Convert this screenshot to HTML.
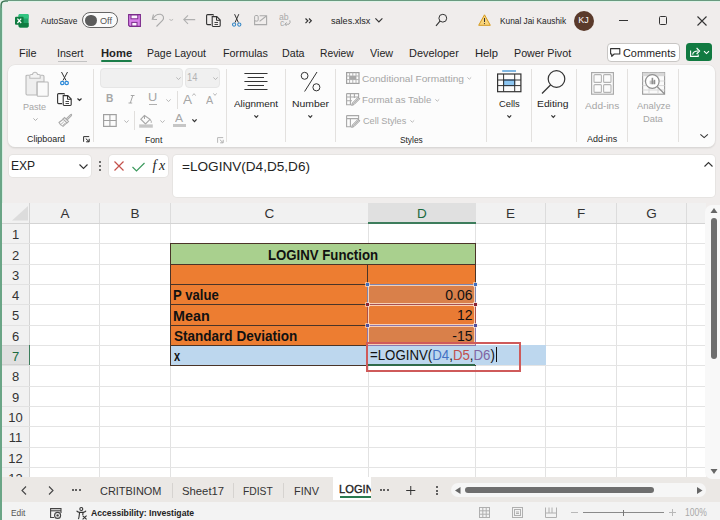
<!DOCTYPE html>
<html><head><meta charset="utf-8"><style>
*{margin:0;padding:0;box-sizing:border-box}
html,body{width:720px;height:520px;overflow:hidden;background:#f0edec;font-family:"Liberation Sans",sans-serif;color:#242424}
.a{position:absolute}
.t{position:absolute;white-space:nowrap;line-height:1}
svg{position:absolute;overflow:visible}
.sep{position:absolute;width:1px;background:#e1dfdd}
</style></head><body>
<div class="a" style="left:0px;top:0px;width:720px;height:1px;background:#6a9a80;"></div>
<div class="a" style="left:0px;top:1px;width:720px;height:1px;background:#dff5e9;"></div>
<div class="a" style="left:0px;top:0px;width:2px;height:520px;background:#6aa586;"></div>
<div class="a" style="left:2px;top:1px;width:1px;height:519px;background:#d7efe2;"></div>
<svg style="left:0px;top:0px;" width="8" height="8" viewBox="0 0 8 8"><path d="M0 0 H8 V1 H5 Q1.2 1.2 1 5 V8 H0 Z" fill="#e4f1e8"/><path d="M1 8 V5.2 Q1.2 1.2 5.2 1 H8" fill="none" stroke="#3f7656" stroke-width="1.3"/><path d="M2.4 8 V5.6 Q2.6 2.6 5.6 2.4 H8" fill="none" stroke="#dff5e9" stroke-width="1"/><path d="M3 8 V6 Q3.2 3.2 6 3 H8 V8 Z" fill="#f0edec"/></svg>
<svg style="left:14.7px;top:13.8px;" width="14" height="14" viewBox="0 0 14 14">
<path d="M5 0 H12.2 Q13.6 0 13.6 1.4 V12 Q13.6 13.4 12.2 13.4 H5 Q3.6 13.4 3.6 12 V1.4 Q3.6 0 5 0Z" fill="#21a366"/>
<path d="M5 0 H12.2 Q13.6 0 13.6 1.4 V4.4 H3.6 V1.4 Q3.6 0 5 0Z" fill="#33c481"/>
<path d="M3.6 9 H13.6 V12 Q13.6 13.4 12.2 13.4 H5 Q3.6 13.4 3.6 12Z" fill="#107c41"/>
<rect x="0" y="2.8" width="8.6" height="8" rx="1" fill="#107c41"/>
<path d="M2.4 4.6 L6.2 9 M6.2 4.6 L2.4 9" stroke="#fff" stroke-width="1.2"/>
</svg>
<div class="t" style="left:41.00px;top:15.75px;font-size:9.5px;height:9.5px;line-height:9.5px;color:#242424;font-weight:normal;transform:scaleX(0.8833);transform-origin:0 0;">AutoSave</div>
<div class="a" style="left:82px;top:12.3px;width:36px;height:16px;border:1px solid #666;border-radius:8px;background:#fbfbfb"></div>
<div class="a" style="left:85px;top:14.7px;width:11.6px;height:11.6px;border-radius:6px;background:#5c5c5c"></div>
<div class="t" style="left:100.13px;top:15.75px;font-size:9.5px;height:9.5px;line-height:9.5px;color:#555;font-weight:normal;transform:scaleX(0.9622);transform-origin:0 0;">Off</div>
<svg style="left:128px;top:13.8px;" width="14" height="14" viewBox="0 0 14 14">
<path d="M.6 .6 H12.4 V12.4 H1.8 L.6 11.2 Z" fill="#d982ea" stroke="#7c2d8c" stroke-width="1.1"/>
<rect x="3" y="1" width="6.8" height="3.8" fill="#fdf4ff" stroke="#7c2d8c" stroke-width="1"/>
<rect x="3.8" y="8.4" width="5.2" height="3.6" fill="#fdf4ff" stroke="#7c2d8c" stroke-width="1"/>
</svg>
<svg style="left:150px;top:12px;" width="26" height="16" viewBox="0 0 26 16">
<path d="M3.5 2.5 L2.3 7.2 L7 7.5" fill="none" stroke="#a9a9a9" stroke-width="1.1"/>
<path d="M2.8 6.8 C5 3 8 2 10.5 2.3 C13.5 2.8 14.5 6 12.5 8.5 L6.5 14.5" fill="none" stroke="#a9a9a9" stroke-width="1.1"/>
</svg>
<svg style="left:169.3px;top:19px;" width="4.5" height="1.8" viewBox="0 0 4.5 1.8"><path d="M0.4 0.4 L2.25 1.4 L4.1 0.4" fill="none" stroke="#b0b0b0" stroke-width="0.9"/></svg>
<svg style="left:183px;top:15.2px;" width="13" height="10" viewBox="0 0 13 10"><path d="M.8 4.6 H12.2 M5 .4 L.8 4.6 L5 8.8" fill="none" stroke="#b0b0b0" stroke-width="1.1"/></svg>
<svg style="left:205.5px;top:14px;" width="15" height="13" viewBox="0 0 15 13">
<path d="M7.5 1.5 V1.2 Q7.5 .6 6.5 .6 H1.6 Q.6 .6 .6 1.6 V9.6 Q.6 10.6 1.6 10.6 H5" fill="none" stroke="#333" stroke-width="1.1"/>
<path d="M6.2 2.6 H10.8 L14.2 6 V11.6 Q14.2 12.5 13.3 12.5 H7.1 Q6.2 12.5 6.2 11.6 Z" fill="none" stroke="#333" stroke-width="1.1"/>
<path d="M10.5 2.8 V6.3 H14" fill="none" stroke="#333" stroke-width="1"/>
<path d="M8.5 8.5 H12 M8.5 10.5 H12" stroke="#333" stroke-width=".9"/>
</svg>
<svg style="left:232px;top:14px;" width="10" height="13" viewBox="0 0 10 13">
<path d="M2.6 .2 L6.4 8.6 M6.8 .2 L3 8.6" stroke="#333" stroke-width="1"/>
<circle cx="2.1" cy="10.6" r="1.6" fill="none" stroke="#3a8ac8" stroke-width="1.1"/>
<circle cx="7.3" cy="10.6" r="1.6" fill="none" stroke="#3a8ac8" stroke-width="1.1"/>
</svg>
<svg style="left:253.5px;top:14.5px;" width="14" height="11" viewBox="0 0 14 11">
<path d="M.6 5 V9.6 H12.6 V.8 H5.6" fill="none" stroke="#a9a9a9" stroke-width="1.1"/>
<rect x=".6" y=".5" width="3.6" height="5.6" rx="1.2" fill="none" stroke="#a9a9a9" stroke-width="1"/>
<path d="M5.6 6.4 L12 1.2" stroke="#a9a9a9" stroke-width="1.1"/>
</svg>
<div class="t" style="left:279.05px;top:13.05px;font-size:8.5px;height:8.5px;line-height:8.5px;color:#a9a9a9;font-weight:normal;transform:scaleX(1.0181);transform-origin:0 0;">ab</div>
<div class="t" style="left:279.55px;top:19.05px;font-size:8.5px;height:8.5px;line-height:8.5px;color:#a9a9a9;font-weight:normal;transform:scaleX(1.0397);transform-origin:0 0;">c</div>
<svg style="left:283.5px;top:19.5px;" width="7" height="6" viewBox="0 0 7 6"><path d="M5.8 .3 Q6.8 2.5 5 4.2 H1 M2.6 2.4 L.8 4.2 L2.6 6" fill="none" stroke="#a9a9a9" stroke-width="1"/></svg>
<svg style="left:305px;top:18px;" width="7" height="6" viewBox="0 0 7 6"><path d="M.5 .5 L2.8 2.8 L.5 5.1 M4 .5 L6.3 2.8 L4 5.1" fill="none" stroke="#333" stroke-width="1.2"/></svg>
<div class="t" style="left:331.43px;top:15.75px;font-size:9.5px;height:9.5px;line-height:9.5px;color:#242424;font-weight:normal;transform:scaleX(0.9569);transform-origin:0 0;">sales.xlsx</div>
<svg style="left:374.5px;top:18.3px;" width="7.8" height="4.4" viewBox="0 0 7.8 4.4"><path d="M0.4 0.4 L3.9 4.0 L7.3999999999999995 0.4" fill="none" stroke="#333" stroke-width="1.1"/></svg>
<svg style="left:435px;top:13px;" width="14" height="14" viewBox="0 0 14 14"><circle cx="7.8" cy="5.2" r="3.9" fill="none" stroke="#333" stroke-width="1"/><path d="M5 8.1 L1 12.8" stroke="#333" stroke-width="1.1"/></svg>
<svg style="left:478px;top:14px;" width="13" height="12" viewBox="0 0 13 12"><path d="M6.5 0.8 L12.3 11.3 H0.7 Z" fill="#f9d57c" stroke="#d49a1f" stroke-width="1"/><path d="M6.5 4 V8" stroke="#333" stroke-width="1"/><circle cx="6.5" cy="9.6" r=".6" fill="#333"/></svg>
<div class="t" style="left:499.74px;top:15.75px;font-size:9.5px;height:9.5px;line-height:9.5px;color:#242424;font-weight:normal;transform:scaleX(0.8747);transform-origin:0 0;">Kunal Jai Kaushik</div>
<div class="a" style="left:573.5px;top:10.5px;width:20px;height:20px;border-radius:10px;background:#5a3a2b"></div>
<div class="t" style="left:483.5px;width:200px;text-align:center;top:16.20px;font-size:9px;height:9px;line-height:9px;color:#fff;font-weight:normal;">KJ</div>
<div class="a" style="left:619px;top:20px;width:9px;height:1px;background:#333;"></div>
<div class="a" style="left:658.5px;top:16px;width:8px;height:9px;border:1px solid #333;border-radius:1.5px"></div>
<svg style="left:697px;top:15.5px;" width="10" height="10" viewBox="0 0 10 10"><path d="M0.5 0.5 L9.5 9.5 M9.5 0.5 L0.5 9.5" stroke="#333" stroke-width="1.1"/></svg>
<div class="t" style="left:18.73px;top:47.95px;font-size:10.5px;height:10.5px;line-height:10.5px;color:#242424;font-weight:normal;transform:scaleX(1.0355);transform-origin:0 0;">File</div>
<div class="t" style="left:57.29px;top:47.95px;font-size:10.5px;height:10.5px;line-height:10.5px;color:#242424;font-weight:normal;transform:scaleX(1.0119);transform-origin:0 0;">Insert</div>
<div class="t" style="left:100.58px;top:47.95px;font-size:10.5px;height:10.5px;line-height:10.5px;color:#242424;font-weight:bold;transform:scaleX(1.0661);transform-origin:0 0;">Home</div>
<div class="t" style="left:146.66px;top:47.95px;font-size:10.5px;height:10.5px;line-height:10.5px;color:#242424;font-weight:normal;transform:scaleX(0.9989);transform-origin:0 0;">Page Layout</div>
<div class="t" style="left:222.89px;top:47.95px;font-size:10.5px;height:10.5px;line-height:10.5px;color:#242424;font-weight:normal;transform:scaleX(1.0263);transform-origin:0 0;">Formulas</div>
<div class="t" style="left:282.40px;top:47.95px;font-size:10.5px;height:10.5px;line-height:10.5px;color:#242424;font-weight:normal;transform:scaleX(1.0154);transform-origin:0 0;">Data</div>
<div class="t" style="left:320.43px;top:47.95px;font-size:10.5px;height:10.5px;line-height:10.5px;color:#242424;font-weight:normal;transform:scaleX(0.9791);transform-origin:0 0;">Review</div>
<div class="t" style="left:370.00px;top:47.95px;font-size:10.5px;height:10.5px;line-height:10.5px;color:#242424;font-weight:normal;transform:scaleX(1.0251);transform-origin:0 0;">View</div>
<div class="t" style="left:409.13px;top:47.95px;font-size:10.5px;height:10.5px;line-height:10.5px;color:#242424;font-weight:normal;transform:scaleX(1.0410);transform-origin:0 0;">Developer</div>
<div class="t" style="left:474.85px;top:47.95px;font-size:10.5px;height:10.5px;line-height:10.5px;color:#242424;font-weight:normal;transform:scaleX(1.0677);transform-origin:0 0;">Help</div>
<div class="t" style="left:514.14px;top:47.95px;font-size:10.5px;height:10.5px;line-height:10.5px;color:#242424;font-weight:normal;transform:scaleX(1.0204);transform-origin:0 0;">Power Pivot</div>
<div class="a" style="left:57.5px;top:60.5px;width:29px;height:1px;background:#c2c2c2;"></div>
<div class="a" style="left:101px;top:59.5px;width:31px;height:2px;background:#1b7d49;border-radius:1px"></div>
<div class="a" style="left:606.5px;top:42.5px;width:73px;height:19px;border:1px solid #c8c6c4;border-radius:4px;background:#fff"></div>
<svg style="left:610px;top:48px;" width="11" height="10" viewBox="0 0 11 10"><path d="M.6 .6 H9.8 V6 H4.2 L1.8 8.4 V6 H.6 Z" fill="none" stroke="#333" stroke-width="1.1" stroke-linejoin="round"/></svg>
<div class="t" style="left:622.76px;top:47.75px;font-size:10.5px;height:10.5px;line-height:10.5px;color:#242424;font-weight:normal;transform:scaleX(1.0366);transform-origin:0 0;">Comments</div>
<div class="a" style="left:686.3px;top:42.6px;width:25.7px;height:18.9px;border-radius:3.5px;background:#117a41"></div>
<svg style="left:690px;top:47px;" width="20" height="10" viewBox="0 0 20 10"><path d="M.6 3.6 V9.4 H8.2 V7.4" fill="none" stroke="#fff" stroke-width="1.1"/><path d="M2.6 7.6 C3 5 5 4 8 4" fill="none" stroke="#fff" stroke-width="1.1"/><path d="M6.6 1 L9.6 4 L6.6 7" fill="none" stroke="#fff" stroke-width="1.1"/><path d="M14 4.2 L16.5 6.6 L19 4.2" fill="none" stroke="#fff" stroke-width="1.1"/></svg>
<div class="a" style="left:8px;top:65px;width:707px;height:82px;background:#fcfcfc;border-radius:7px;box-shadow:0 0 0 .5px #e2e0de,0 1px 2px rgba(0,0,0,.16)"></div>
<div class="a" style="left:93px;top:69px;width:1px;height:73px;background:#e3e1df;"></div>
<div class="a" style="left:226px;top:69px;width:1px;height:73px;background:#e3e1df;"></div>
<div class="a" style="left:285px;top:69px;width:1px;height:73px;background:#e3e1df;"></div>
<div class="a" style="left:335px;top:69px;width:1px;height:73px;background:#e3e1df;"></div>
<div class="a" style="left:486px;top:69px;width:1px;height:73px;background:#e3e1df;"></div>
<div class="a" style="left:531px;top:69px;width:1px;height:73px;background:#e3e1df;"></div>
<div class="a" style="left:576px;top:69px;width:1px;height:73px;background:#e3e1df;"></div>
<div class="a" style="left:627px;top:69px;width:1px;height:73px;background:#e3e1df;"></div>
<div class="a" style="left:678px;top:69px;width:1px;height:73px;background:#e3e1df;"></div>
<svg style="left:25px;top:71px;" width="25" height="26" viewBox="0 0 25 26">
<path d="M4.5 4.2 H2.2 Q1 4.2 1 5.4 V22.8 Q1 24 2.2 24 H12 V11 H19 V5.4 Q19 4.2 17.8 4.2 H15.5" fill="#eeeeee" stroke="#b8b8b8" stroke-width="1.1"/>
<path d="M4.8 7.3 V4.6 Q4.8 3.5 6 3.5 H7.5 Q7.8 1.2 10 1.2 Q12.2 1.2 12.5 3.5 H14 Q15.2 3.5 15.2 4.6 V7.3 Z" fill="#f4f4f4" stroke="#bdbdbd" stroke-width="1.1"/>
<rect x="12.2" y="11" width="11" height="14.2" rx=".8" fill="#fafafa" stroke="#b8b8b8" stroke-width="1.1"/>
</svg>
<div class="t" style="left:23.28px;top:102.25px;font-size:9.5px;height:9.5px;line-height:9.5px;color:#a6a6a6;font-weight:normal;transform:scaleX(0.9530);transform-origin:0 0;">Paste</div>
<svg style="left:32.5px;top:117.5px;" width="5" height="3" viewBox="0 0 5 3"><path d="M0.4 0.4 L2.5 2.5 L4.6 0.4" fill="none" stroke="#b0b0b0" stroke-width="1"/></svg>
<svg style="left:60px;top:71.5px;" width="9" height="14" viewBox="0 0 9 14">
<path d="M1.5 0 L6 8.5 M7.5 0 L3 8.5" stroke="#333" stroke-width="1"/>
<circle cx="2.3" cy="11" r="1.7" fill="none" stroke="#2b88d8" stroke-width="1.2"/>
<circle cx="6.7" cy="11" r="1.7" fill="none" stroke="#2b88d8" stroke-width="1.2"/>
</svg>
<svg style="left:57px;top:93px;" width="15" height="13" viewBox="0 0 15 13">
<path d="M7.5 1.5 V1.2 Q7.5 .6 6.5 .6 H1.6 Q.6 .6 .6 1.6 V9.6 Q.6 10.6 1.6 10.6 H5" fill="none" stroke="#333" stroke-width="1.1"/>
<path d="M6.2 2.6 H10.8 L14.2 6 V11.6 Q14.2 12.5 13.3 12.5 H7.1 Q6.2 12.5 6.2 11.6 Z" fill="none" stroke="#333" stroke-width="1.1"/>
<path d="M10.5 2.8 V6.3 H14" fill="none" stroke="#333" stroke-width="1"/>
<path d="M8.5 8.5 H12 M8.5 10.5 H12" stroke="#333" stroke-width=".9"/>
</svg>
<svg style="left:77px;top:97.8px;" width="5" height="3" viewBox="0 0 5 3"><path d="M0.5 0.5 L2.5 2.5 L4.5 0.5" fill="none" stroke="#333" stroke-width="1.2"/></svg>
<svg style="left:57.5px;top:114px;" width="14" height="13" viewBox="0 0 14 13">
<path d="M8.2 4.8 L12.6 .6 Q13.4 0 13.6 .8 Q13.7 1.3 13.2 1.8 L9.2 5.8" fill="none" stroke="#ababab" stroke-width="1.1"/>
<path d="M6.5 3.5 L10.5 7.5 L9 9 L5 5 Z" fill="none" stroke="#ababab" stroke-width="1.1"/>
<path d="M5.2 5.2 L1 8.5 Q2.5 11.5 5 12.3 L8.8 8.8" fill="none" stroke="#ababab" stroke-width="1.1"/>
<path d="M3 10.3 L5.8 7.8 M4.6 11.5 L7.2 9.2" stroke="#ababab" stroke-width=".9"/>
</svg>
<div class="t" style="left:26.56px;top:134.25px;font-size:9.5px;height:9.5px;line-height:9.5px;color:#242424;font-weight:normal;transform:scaleX(0.9362);transform-origin:0 0;">Clipboard</div>
<svg style="left:83.2px;top:136px;" width="7" height="6.5" viewBox="0 0 7 6.5"><path d="M.6 5.8 V.6 H6.2" fill="none" stroke="#333" stroke-width="1"/><path d="M2.8 2.6 L6 5.6 M3.2 5.8 H6.2 V2.8" fill="none" stroke="#222" stroke-width="1"/></svg>
<div class="a" style="left:100px;top:68px;width:83px;height:19.5px;background:#f0f0f0;border:1px solid #e6e6e6;border-radius:4px"></div>
<svg style="left:176px;top:76.5px;" width="5" height="3" viewBox="0 0 5 3"><path d="M0.4 0.4 L2.5 2.6 L4.6 0.4" fill="none" stroke="#b8b8b8" stroke-width="1"/></svg>
<div class="a" style="left:185px;top:68px;width:34.6px;height:19.5px;background:#f0f0f0;border:1px solid #e6e6e6;border-radius:4px"></div>
<div class="t" style="left:186.85px;top:73.40px;font-size:10px;height:10px;line-height:10px;color:#b3b3b3;font-weight:normal;transform:scaleX(0.9314);transform-origin:0 0;">14</div>
<svg style="left:213px;top:76.5px;" width="5" height="3" viewBox="0 0 5 3"><path d="M0.4 0.4 L2.5 2.6 L4.6 0.4" fill="none" stroke="#b8b8b8" stroke-width="1"/></svg>
<div class="t" style="left:106.09px;top:93.60px;font-size:10px;height:10px;line-height:10px;color:#a6a6a6;font-weight:bold;transform:scaleX(1.0161);transform-origin:0 0;">B</div>
<svg style="left:128px;top:94.5px;" width="7" height="8.5" viewBox="0 0 7 8.5"><path d="M2.8 .5 H6.5 M.5 8 H4.2 M4.8 .5 L2.3 8" fill="none" stroke="#a6a6a6" stroke-width="1"/></svg>
<div class="t" style="left:148.11px;top:93.40px;font-size:10px;height:10px;line-height:10px;color:#a6a6a6;font-weight:normal;transform:scaleX(1.2759);transform-origin:0 0;">U</div>
<div class="a" style="left:148.5px;top:103.6px;width:8.5px;height:1px;background:#b0b0b0;"></div>
<svg style="left:166px;top:98.6px;" width="5" height="3" viewBox="0 0 5 3"><path d="M0.4 0.4 L2.5 2.6 L4.6 0.4" fill="none" stroke="#b8b8b8" stroke-width="1"/></svg>
<div class="a" style="left:177px;top:90.5px;width:1px;height:18px;background:#e1dfdd;"></div>
<div class="t" style="left:183.40px;top:92.50px;font-size:13px;height:13px;line-height:13px;color:#a6a6a6;font-weight:normal;transform:scaleX(1.0448);transform-origin:0 0;">A</div>
<svg style="left:192.3px;top:93.2px;" width="4" height="3" viewBox="0 0 4 3"><path d="M.4 2.6 L2 .6 L3.6 2.6" fill="none" stroke="#b0b0b0" stroke-width=".9"/></svg>
<div class="t" style="left:206.00px;top:94.50px;font-size:11px;height:11px;line-height:11px;color:#a6a6a6;font-weight:normal;transform:scaleX(0.9769);transform-origin:0 0;">A</div>
<svg style="left:213.2px;top:93.2px;" width="4" height="3" viewBox="0 0 4 3"><path d="M.4 .4 L2 2.4 L3.6 .4" fill="none" stroke="#b0b0b0" stroke-width=".9"/></svg>
<svg style="left:103px;top:114px;" width="14" height="13" viewBox="0 0 14 13"><rect x="0.6" y="0.6" width="12.6" height="11.8" fill="none" stroke="#a0a0a0" stroke-width="1.2"/><path d="M6.9 0.6 V12.4 M0.6 6.5 H13.2" stroke="#a0a0a0" stroke-width="1.1"/></svg>
<svg style="left:123.8px;top:119.5px;" width="5" height="3" viewBox="0 0 5 3"><path d="M0.4 0.4 L2.5 2.6 L4.6 0.4" fill="none" stroke="#b8b8b8" stroke-width="1"/></svg>
<div class="a" style="left:134px;top:111.3px;width:1px;height:19px;background:#e1dfdd;"></div>
<svg style="left:139px;top:114.5px;" width="14" height="13" viewBox="0 0 14 13">
<path d="M5.5 .5 L1.8 4.2 L6.5 8.9 L11 4.4 Z" fill="none" stroke="#a8a8a8" stroke-width="1.1"/>
<path d="M5.5 .5 V4" stroke="#a8a8a8" stroke-width="1"/>
<path d="M11 4.4 Q13 6.5 12.2 7.8" fill="none" stroke="#a8a8a8" stroke-width="1"/>
<rect x=".2" y="9.4" width="13.6" height="3.3" fill="#c6c6c6"/>
</svg>
<svg style="left:159.5px;top:119.5px;" width="5" height="3" viewBox="0 0 5 3"><path d="M0.4 0.4 L2.5 2.6 L4.6 0.4" fill="none" stroke="#b8b8b8" stroke-width="1"/></svg>
<div class="t" style="left:175.30px;top:113.05px;font-size:10.5px;height:10.5px;line-height:10.5px;color:#a6a6a6;font-weight:normal;transform:scaleX(1.1514);transform-origin:0 0;">A</div>
<div class="a" style="left:173px;top:124.3px;width:13.2px;height:3px;background:#c6c6c6;"></div>
<svg style="left:192.3px;top:119.4px;" width="5" height="3" viewBox="0 0 5 3"><path d="M0.4 0.4 L2.5 2.6 L4.6 0.4" fill="none" stroke="#333" stroke-width="1.3"/></svg>
<div class="t" style="left:144.81px;top:134.75px;font-size:9.5px;height:9.5px;line-height:9.5px;color:#242424;font-weight:normal;transform:scaleX(0.9093);transform-origin:0 0;">Font</div>
<svg style="left:217px;top:136.5px;" width="7" height="6.5" viewBox="0 0 7 6.5"><path d="M.6 5.8 V.6 H6.2" fill="none" stroke="#b8b8b8" stroke-width="1"/><path d="M2.8 2.6 L6 5.6 M3.2 5.8 H6.2 V2.8" fill="none" stroke="#b0b0b0" stroke-width="1"/></svg>
<svg style="left:244px;top:72px;" width="24" height="19" viewBox="0 0 24 19"><path d="M.4 1.5 H23.5 M3.6 5.5 H20 M.4 9.5 H23.5 M3.6 13.5 H20 M.4 17.5 H23.5" stroke="#333" stroke-width="1"/></svg>
<div class="t" style="left:234.00px;top:99.25px;font-size:9.5px;height:9.5px;line-height:9.5px;color:#242424;font-weight:normal;transform:scaleX(1.0431);transform-origin:0 0;">Alignment</div>
<svg style="left:253.5px;top:115px;" width="4.6" height="2.8" viewBox="0 0 4.6 2.8"><path d="M0.4 0.4 L2.3 2.4 L4.199999999999999 0.4" fill="none" stroke="#333" stroke-width="1.2"/></svg>
<svg style="left:300px;top:72px;" width="22" height="21" viewBox="0 0 22 21"><ellipse cx="4.6" cy="3.8" rx="3.4" ry="3.5" fill="none" stroke="#333" stroke-width="1"/><ellipse cx="16.4" cy="15.3" rx="3.5" ry="3.6" fill="none" stroke="#333" stroke-width="1"/><path d="M17 0 L4.6 19.5" stroke="#333" stroke-width="1"/></svg>
<div class="t" style="left:292.17px;top:99.25px;font-size:9.5px;height:9.5px;line-height:9.5px;color:#242424;font-weight:normal;transform:scaleX(1.0952);transform-origin:0 0;">Number</div>
<svg style="left:308.3px;top:115px;" width="4.6" height="2.8" viewBox="0 0 4.6 2.8"><path d="M0.4 0.4 L2.3 2.4 L4.199999999999999 0.4" fill="none" stroke="#333" stroke-width="1.2"/></svg>
<svg style="left:346px;top:72px;" width="14" height="12" viewBox="0 0 14 12"><rect x=".6" y=".6" width="12.4" height="10.8" fill="none" stroke="#a0a0a0" stroke-width="1.2"/><path d="M.6 4 H13 M.6 7.6 H13 M3.6 .6 V11.4 M6.8 .6 V11.4 M10 .6 V11.4" stroke="#b4b4b4" stroke-width="1"/><rect x="3.6" y="4" width="6.4" height="3.6" fill="#a8a8a8"/></svg>
<div class="t" style="left:362.49px;top:73.85px;font-size:9.5px;height:9.5px;line-height:9.5px;color:#a6a6a6;font-weight:normal;transform:scaleX(1.0669);transform-origin:0 0;">Conditional Formatting</div>
<svg style="left:467.3px;top:77.3px;" width="4.6" height="2.6" viewBox="0 0 4.6 2.6"><path d="M0.4 0.4 L2.3 2.2 L4.199999999999999 0.4" fill="none" stroke="#b8b8b8" stroke-width="1"/></svg>
<svg style="left:346px;top:93px;" width="14" height="13" viewBox="0 0 14 13"><path d="M.6 .6 H12.6 V5 M.6 .6 V11.8 H5 M.6 4 H12.6 M.6 7.8 H6 M4.4 .6 V11.8 M8.4 .6 V5" fill="none" stroke="#a8a8a8" stroke-width="1.1"/><path d="M5.6 12.4 L6.4 10 L12.2 4.2 L13.8 5.8 L8 11.6 Z" fill="#e6e6e6" stroke="#a0a0a0" stroke-width="1"/><path d="M7.4 10.8 L12.8 5.2" stroke="#a0a0a0" stroke-width=".8"/></svg>
<div class="t" style="left:362.23px;top:94.75px;font-size:9.5px;height:9.5px;line-height:9.5px;color:#a6a6a6;font-weight:normal;transform:scaleX(1.0196);transform-origin:0 0;">Format as Table</div>
<svg style="left:434.5px;top:98.5px;" width="4.6" height="2.6" viewBox="0 0 4.6 2.6"><path d="M0.4 0.4 L2.3 2.2 L4.199999999999999 0.4" fill="none" stroke="#b8b8b8" stroke-width="1"/></svg>
<svg style="left:346px;top:115px;" width="14" height="13" viewBox="0 0 14 13"><path d="M.6 .6 H12.6 V5 M.6 .6 V11.8 H5 M.6 3.6 H12.6 M4.4 3.6 V11.8" fill="none" stroke="#a8a8a8" stroke-width="1.1"/><path d="M5.6 12.4 L6.4 10 L12.2 4.2 L13.8 5.8 L8 11.6 Z" fill="#e6e6e6" stroke="#a0a0a0" stroke-width="1"/><path d="M7.4 10.8 L12.8 5.2" stroke="#a0a0a0" stroke-width=".8"/></svg>
<div class="t" style="left:362.54px;top:116.25px;font-size:9.5px;height:9.5px;line-height:9.5px;color:#a6a6a6;font-weight:normal;transform:scaleX(0.9642);transform-origin:0 0;">Cell Styles</div>
<svg style="left:409.5px;top:120px;" width="4.6" height="2.6" viewBox="0 0 4.6 2.6"><path d="M0.4 0.4 L2.3 2.2 L4.199999999999999 0.4" fill="none" stroke="#b8b8b8" stroke-width="1"/></svg>
<div class="t" style="left:399.58px;top:134.75px;font-size:9.5px;height:9.5px;line-height:9.5px;color:#242424;font-weight:normal;transform:scaleX(0.8772);transform-origin:0 0;">Styles</div>
<svg style="left:497px;top:69.5px;" width="25" height="23" viewBox="0 0 25 23">
<path d="M5.2 1 H19" stroke="#4a9ad8" stroke-width="1.4"/>
<rect x="6.6" y="10" width="11.1" height="5.6" fill="#8cc6f2" stroke="#2a6db0" stroke-width="1"/>
<rect x=".6" y="4" width="23.3" height="17.7" fill="none" stroke="#333" stroke-width="1.2"/>
<path d="M.6 10 H23.9 M.6 15.6 H23.9 M6.6 4 V21.7 M17.7 4 V21.7" stroke="#333" stroke-width="1"/>
</svg>
<div class="t" style="left:498.53px;top:98.75px;font-size:9.5px;height:9.5px;line-height:9.5px;color:#242424;font-weight:normal;transform:scaleX(0.9838);transform-origin:0 0;">Cells</div>
<svg style="left:506.7px;top:115px;" width="4.6" height="2.8" viewBox="0 0 4.6 2.8"><path d="M0.4 0.4 L2.3 2.4 L4.199999999999999 0.4" fill="none" stroke="#333" stroke-width="1.2"/></svg>
<svg style="left:541px;top:70px;" width="26" height="26" viewBox="0 0 26 26"><circle cx="15.5" cy="9" r="8.3" fill="none" stroke="#333" stroke-width="1.2"/><path d="M9.5 15 L1 23.5" stroke="#333" stroke-width="1.3"/></svg>
<div class="t" style="left:537.18px;top:98.75px;font-size:9.5px;height:9.5px;line-height:9.5px;color:#242424;font-weight:normal;transform:scaleX(1.0852);transform-origin:0 0;">Editing</div>
<svg style="left:550.7px;top:115px;" width="4.6" height="2.8" viewBox="0 0 4.6 2.8"><path d="M0.4 0.4 L2.3 2.4 L4.199999999999999 0.4" fill="none" stroke="#333" stroke-width="1.2"/></svg>
<svg style="left:591px;top:72px;" width="23" height="23" viewBox="0 0 23 23"><rect x=".6" y=".6" width="21.8" height="21.6" fill="none" stroke="#aaaaaa" stroke-width="1.2"/><rect x="3" y="2.6" width="7.4" height="7.8" rx="1" fill="none" stroke="#b4b4b4" stroke-width="1.1"/><rect x="12.6" y="2.6" width="7.4" height="7.8" rx="1" fill="none" stroke="#b4b4b4" stroke-width="1.1"/><rect x="3" y="12.6" width="7.4" height="7.8" rx="1" fill="none" stroke="#b4b4b4" stroke-width="1.1"/><rect x="12.6" y="12.6" width="7.4" height="7.8" rx="1" fill="none" stroke="#b4b4b4" stroke-width="1.1"/></svg>
<div class="t" style="left:584.90px;top:100.65px;font-size:9.5px;height:9.5px;line-height:9.5px;color:#a6a6a6;font-weight:normal;transform:scaleX(1.0652);transform-origin:0 0;">Add-ins</div>
<div class="t" style="left:586.70px;top:134.25px;font-size:9.5px;height:9.5px;line-height:9.5px;color:#242424;font-weight:normal;transform:scaleX(0.9398);transform-origin:0 0;">Add-ins</div>
<svg style="left:642px;top:72px;" width="24" height="23" viewBox="0 0 24 23">
<rect x=".6" y=".6" width="22" height="21.6" fill="#fafafa" stroke="#9a9a9a" stroke-width="1.1"/>
<rect x=".6" y=".6" width="22" height="3.6" fill="#d8d8d8"/>
<path d="M.6 9 H22.6 M.6 13.6 H22.6 M.6 18 H22.6 M7 .6 V22 M16 .6 V22" stroke="#d8d8d8" stroke-width="1"/>
<circle cx="10.3" cy="9.5" r="6.8" fill="#fff" stroke="#8f8f8f" stroke-width="1.2"/>
<rect x="7.6" y="8.6" width="5.6" height="3.6" fill="#c8c8c8"/>
<rect x="9.6" y="5.8" width="1.6" height="6.4" fill="#8f8f8f"/><rect x="11.8" y="7.8" width="1.4" height="4.4" fill="#8f8f8f"/>
<path d="M15.2 14.6 L22.6 22" stroke="#8f8f8f" stroke-width="1.3"/>
</svg>
<div class="t" style="left:636.70px;top:100.65px;font-size:9.5px;height:9.5px;line-height:9.5px;color:#a6a6a6;font-weight:normal;transform:scaleX(0.9927);transform-origin:0 0;">Analyze</div>
<div class="t" style="left:643.15px;top:113.65px;font-size:9.5px;height:9.5px;line-height:9.5px;color:#a6a6a6;font-weight:normal;transform:scaleX(0.9856);transform-origin:0 0;">Data</div>
<svg style="left:699.7px;top:134.2px;" width="8.3" height="4" viewBox="0 0 8.3 4"><path d="M0.4 0.4 L4.15 3.6 L7.9 0.4" fill="none" stroke="#333" stroke-width="1.1"/></svg>
<div class="a" style="left:9px;top:155px;width:82px;height:22px;background:#fff;border-radius:4px;box-shadow:0 0 0 1px #e6e4e2"></div>
<div class="t" style="left:11.23px;top:159.00px;font-size:13px;height:13px;line-height:13px;color:#242424;font-weight:normal;transform:scaleX(0.9297);transform-origin:0 0;">EXP</div>
<svg style="left:79px;top:163.5px;" width="9" height="5" viewBox="0 0 9 5"><path d="M0.5 0.5 L4.5 4.5 L8.5 0.5" fill="none" stroke="#333" stroke-width="1.1"/></svg>
<div class="a" style="left:99px;top:160.8px;width:2px;height:2px;border-radius:1px;background:#444"></div>
<div class="a" style="left:99px;top:164.8px;width:2px;height:2px;border-radius:1px;background:#444"></div>
<div class="a" style="left:99px;top:168.8px;width:2px;height:2px;border-radius:1px;background:#444"></div>
<div class="a" style="left:109px;top:155px;width:59px;height:22px;background:#fff;border-radius:4px;box-shadow:0 0 0 1px #e6e4e2"></div>
<svg style="left:114px;top:161px;" width="10" height="10" viewBox="0 0 10 10"><path d="M.5 .5 L9.5 9.5 M9.5 .5 L.5 9.5" stroke="#c4524c" stroke-width="1.2"/></svg>
<svg style="left:132px;top:161.5px;" width="13" height="10" viewBox="0 0 13 10"><path d="M.5 5 L4.5 9 L12.5 1" fill="none" stroke="#3d9a5e" stroke-width="1.2"/></svg>
<div class="t" style="left:152.50px;top:158.50px;font-size:14px;height:14px;line-height:14px;color:#222;font-weight:normal;font-family:'Liberation Serif',serif;letter-spacing:2.5px"><i>fx</i></div>
<div class="a" style="left:173px;top:155px;width:542px;height:42px;background:#fff;border-radius:4px;box-shadow:0 0 0 1px #e6e4e2"></div>
<div class="t" style="left:182.12px;top:159.80px;font-size:13.4px;height:13.4px;line-height:13.4px;color:#242424;font-weight:normal;transform:scaleX(1.0148);transform-origin:0 0;">=LOGINV(D4,D5,D6)</div>
<svg style="left:704px;top:162px;" width="9" height="5" viewBox="0 0 9 5"><path d="M.5 4.5 L4.5 .5 L8.5 4.5" fill="none" stroke="#333" stroke-width="1.1"/></svg>
<div class="a" style="left:2px;top:203px;width:704px;height:274px;background:#ffffff;"></div>
<div class="a" style="left:2px;top:203px;width:704px;height:20px;background:#f1f1f1;"></div>
<div class="a" style="left:2px;top:223px;width:28px;height:254px;background:#f1f1f1;"></div>
<svg style="left:11.5px;top:206px;" width="17" height="15" viewBox="0 0 17 15"><path d="M16 0 V14.5 H0 Z" fill="#dcdcdc"/></svg>
<div class="a" style="left:2px;top:223px;width:704px;height:1px;background:#d4d4d4;"></div>
<div class="a" style="left:29px;top:203px;width:1px;height:274px;background:#d4d4d4;"></div>
<div class="a" style="left:99px;top:224px;width:1px;height:253px;background:#e2e2e2;"></div>
<div class="a" style="left:99px;top:203px;width:1px;height:20px;background:#dcdcdc;"></div>
<div class="a" style="left:170px;top:224px;width:1px;height:253px;background:#e2e2e2;"></div>
<div class="a" style="left:170px;top:203px;width:1px;height:20px;background:#dcdcdc;"></div>
<div class="a" style="left:367.5px;top:224px;width:1px;height:253px;background:#e2e2e2;"></div>
<div class="a" style="left:367.5px;top:203px;width:1px;height:20px;background:#dcdcdc;"></div>
<div class="a" style="left:475px;top:224px;width:1px;height:253px;background:#e2e2e2;"></div>
<div class="a" style="left:475px;top:203px;width:1px;height:20px;background:#dcdcdc;"></div>
<div class="a" style="left:545px;top:224px;width:1px;height:253px;background:#e2e2e2;"></div>
<div class="a" style="left:545px;top:203px;width:1px;height:20px;background:#dcdcdc;"></div>
<div class="a" style="left:616px;top:224px;width:1px;height:253px;background:#e2e2e2;"></div>
<div class="a" style="left:616px;top:203px;width:1px;height:20px;background:#dcdcdc;"></div>
<div class="a" style="left:686px;top:224px;width:1px;height:253px;background:#e2e2e2;"></div>
<div class="a" style="left:686px;top:203px;width:1px;height:20px;background:#dcdcdc;"></div>
<div class="a" style="left:760px;top:224px;width:1px;height:253px;background:#e2e2e2;"></div>
<div class="a" style="left:760px;top:203px;width:1px;height:20px;background:#dcdcdc;"></div>
<div class="a" style="left:30px;top:243px;width:676px;height:1px;background:#e4e4e4;"></div>
<div class="a" style="left:2px;top:243px;width:28px;height:1px;background:#e2e2e2;"></div>
<div class="a" style="left:30px;top:264px;width:676px;height:1px;background:#e4e4e4;"></div>
<div class="a" style="left:2px;top:264px;width:28px;height:1px;background:#e2e2e2;"></div>
<div class="a" style="left:30px;top:284px;width:676px;height:1px;background:#e4e4e4;"></div>
<div class="a" style="left:2px;top:284px;width:28px;height:1px;background:#e2e2e2;"></div>
<div class="a" style="left:30px;top:304px;width:676px;height:1px;background:#e4e4e4;"></div>
<div class="a" style="left:2px;top:304px;width:28px;height:1px;background:#e2e2e2;"></div>
<div class="a" style="left:30px;top:325px;width:676px;height:1px;background:#e4e4e4;"></div>
<div class="a" style="left:2px;top:325px;width:28px;height:1px;background:#e2e2e2;"></div>
<div class="a" style="left:30px;top:345px;width:676px;height:1px;background:#e4e4e4;"></div>
<div class="a" style="left:2px;top:345px;width:28px;height:1px;background:#e2e2e2;"></div>
<div class="a" style="left:30px;top:365px;width:676px;height:1px;background:#e4e4e4;"></div>
<div class="a" style="left:2px;top:365px;width:28px;height:1px;background:#e2e2e2;"></div>
<div class="a" style="left:30px;top:386px;width:676px;height:1px;background:#e4e4e4;"></div>
<div class="a" style="left:2px;top:386px;width:28px;height:1px;background:#e2e2e2;"></div>
<div class="a" style="left:30px;top:406px;width:676px;height:1px;background:#e4e4e4;"></div>
<div class="a" style="left:2px;top:406px;width:28px;height:1px;background:#e2e2e2;"></div>
<div class="a" style="left:30px;top:426px;width:676px;height:1px;background:#e4e4e4;"></div>
<div class="a" style="left:2px;top:426px;width:28px;height:1px;background:#e2e2e2;"></div>
<div class="a" style="left:30px;top:447px;width:676px;height:1px;background:#e4e4e4;"></div>
<div class="a" style="left:2px;top:447px;width:28px;height:1px;background:#e2e2e2;"></div>
<div class="a" style="left:30px;top:467px;width:676px;height:1px;background:#e4e4e4;"></div>
<div class="a" style="left:2px;top:467px;width:28px;height:1px;background:#e2e2e2;"></div>
<div class="a" style="left:367.5px;top:203px;width:108px;height:20px;background:#e0e0e0;"></div>
<div class="a" style="left:367.5px;top:222px;width:108px;height:1.6px;background:#3d7d5c;"></div>
<div class="a" style="left:2px;top:344.98px;width:28px;height:20.33px;background:#e0e0e0;box-shadow:inset 0 1px 0 #d2d2d2,inset 0 -1px 0 #d2d2d2"></div>
<div class="a" style="left:28.6px;top:344.98px;width:1.6px;height:20.33px;background:#3d7d5c;"></div>
<div class="t" style="left:-35.0px;width:200px;text-align:center;top:207.45px;font-size:13.5px;height:13.5px;line-height:13.5px;color:#333;font-weight:normal;">A</div>
<div class="t" style="left:35.0px;width:200px;text-align:center;top:207.45px;font-size:13.5px;height:13.5px;line-height:13.5px;color:#333;font-weight:normal;">B</div>
<div class="t" style="left:169.25px;width:200px;text-align:center;top:207.45px;font-size:13.5px;height:13.5px;line-height:13.5px;color:#333;font-weight:normal;">C</div>
<div class="t" style="left:321.75px;width:200px;text-align:center;top:207.45px;font-size:13.5px;height:13.5px;line-height:13.5px;color:#1b6b3f;font-weight:normal;">D</div>
<div class="t" style="left:410.5px;width:200px;text-align:center;top:207.45px;font-size:13.5px;height:13.5px;line-height:13.5px;color:#333;font-weight:normal;">E</div>
<div class="t" style="left:481.0px;width:200px;text-align:center;top:207.45px;font-size:13.5px;height:13.5px;line-height:13.5px;color:#333;font-weight:normal;">F</div>
<div class="t" style="left:551.5px;width:200px;text-align:center;top:207.45px;font-size:13.5px;height:13.5px;line-height:13.5px;color:#333;font-weight:normal;">G</div>
<div class="t" style="left:623.5px;width:200px;text-align:center;top:207.45px;font-size:13.5px;height:13.5px;line-height:13.5px;color:#333;font-weight:normal;">H</div>
<div class="t" style="left:-84.5px;width:200px;text-align:center;top:228.16px;font-size:13px;height:13px;line-height:13px;color:#333;font-weight:normal;">1</div>
<div class="t" style="left:-84.5px;width:200px;text-align:center;top:248.50px;font-size:13px;height:13px;line-height:13px;color:#333;font-weight:normal;">2</div>
<div class="t" style="left:-84.5px;width:200px;text-align:center;top:268.82px;font-size:13px;height:13px;line-height:13px;color:#333;font-weight:normal;">3</div>
<div class="t" style="left:-84.5px;width:200px;text-align:center;top:289.15px;font-size:13px;height:13px;line-height:13px;color:#333;font-weight:normal;">4</div>
<div class="t" style="left:-84.5px;width:200px;text-align:center;top:309.49px;font-size:13px;height:13px;line-height:13px;color:#333;font-weight:normal;">5</div>
<div class="t" style="left:-84.5px;width:200px;text-align:center;top:329.81px;font-size:13px;height:13px;line-height:13px;color:#333;font-weight:normal;">6</div>
<div class="t" style="left:-84.5px;width:200px;text-align:center;top:350.14px;font-size:13px;height:13px;line-height:13px;color:#1b6b3f;font-weight:normal;">7</div>
<div class="t" style="left:-84.5px;width:200px;text-align:center;top:370.48px;font-size:13px;height:13px;line-height:13px;color:#333;font-weight:normal;">8</div>
<div class="t" style="left:-84.5px;width:200px;text-align:center;top:390.80px;font-size:13px;height:13px;line-height:13px;color:#333;font-weight:normal;">9</div>
<div class="t" style="left:-84.5px;width:200px;text-align:center;top:411.13px;font-size:13px;height:13px;line-height:13px;color:#333;font-weight:normal;">10</div>
<div class="t" style="left:-84.5px;width:200px;text-align:center;top:431.46px;font-size:13px;height:13px;line-height:13px;color:#333;font-weight:normal;">11</div>
<div class="t" style="left:-84.5px;width:200px;text-align:center;top:451.79px;font-size:13px;height:13px;line-height:13px;color:#333;font-weight:normal;">12</div>
<div class="t" style="left:-84.5px;width:200px;text-align:center;top:472.12px;font-size:13px;height:13px;line-height:13px;color:#333;font-weight:normal;">13</div>
<div class="a" style="left:170px;top:243.32999999999998px;width:305px;height:20.33px;background:#a9d08e;"></div>
<div class="a" style="left:170px;top:263.65999999999997px;width:305px;height:81.32px;background:#ed7d31;"></div>
<div class="a" style="left:170px;top:344.98px;width:376px;height:20.33px;background:#bdd7ee;"></div>
<div class="a" style="left:368px;top:283.99px;width:107px;height:20.33px;background:#d9804a;"></div>
<div class="a" style="left:368px;top:304.32px;width:107px;height:20.33px;background:#e97b34;"></div>
<div class="a" style="left:368px;top:324.65px;width:107px;height:20.33px;background:#d9804a;"></div>
<div class="a" style="left:170px;top:243px;width:306px;height:1px;background:#4a3428;"></div>
<div class="a" style="left:170px;top:264px;width:306px;height:1px;background:#4a3428;"></div>
<div class="a" style="left:170px;top:284px;width:306px;height:1px;background:#4a3428;"></div>
<div class="a" style="left:170px;top:304px;width:306px;height:1px;background:#4a3428;"></div>
<div class="a" style="left:170px;top:325px;width:306px;height:1px;background:#4a3428;"></div>
<div class="a" style="left:170px;top:345px;width:306px;height:1px;background:#4a3428;"></div>
<div class="a" style="left:170px;top:365px;width:306px;height:1px;background:#4a3428;"></div>
<div class="a" style="left:170px;top:243px;width:1px;height:123px;background:#4a3428;"></div>
<div class="a" style="left:475px;top:243px;width:1px;height:103px;background:#4a3428;"></div>
<div class="a" style="left:367px;top:264px;width:1px;height:82px;background:#4a3428;"></div>
<div class="t" style="left:267.81px;top:247.69px;font-size:14px;height:14px;line-height:14px;color:#111;font-weight:bold;transform:scaleX(0.9431);transform-origin:0 0;">LOGINV Function</div>
<div class="t" style="left:173.21px;top:288.36px;font-size:14px;height:14px;line-height:14px;color:#111;font-weight:bold;transform:scaleX(0.9376);transform-origin:0 0;">P value</div>
<div class="t" style="left:173.14px;top:308.69px;font-size:14px;height:14px;line-height:14px;color:#111;font-weight:bold;transform:scaleX(1.0246);transform-origin:0 0;">Mean</div>
<div class="t" style="left:173.59px;top:329.01px;font-size:14px;height:14px;line-height:14px;color:#111;font-weight:bold;transform:scaleX(0.9661);transform-origin:0 0;">Standard Deviation</div>
<div class="t" style="left:173.89px;top:349.35px;font-size:14px;height:14px;line-height:14px;color:#111;font-weight:bold;transform:scaleX(0.7937);transform-origin:0 0;">x</div>
<div class="t" style="left:370px;width:102.5px;text-align:right;top:288.16px;font-size:14px;line-height:14px;color:#111">0.06</div>
<div class="t" style="left:370px;width:102.5px;text-align:right;top:308.49px;font-size:14px;line-height:14px;color:#111">12</div>
<div class="t" style="left:370px;width:102.5px;text-align:right;top:328.81px;font-size:14px;line-height:14px;color:#111">-15</div>
<div class="a" style="left:367px;top:284.00px;width:109px;height:21.00px;border:1px solid #7c86b0"></div>
<div class="a" style="left:368px;top:285.00px;width:107px;height:19.00px;border:1px solid rgba(255,235,220,.75)"></div>
<div class="a" style="left:367px;top:304.00px;width:109px;height:22.00px;border:1px solid #a85050"></div>
<div class="a" style="left:368px;top:305.00px;width:107px;height:20.00px;border:1px solid rgba(255,235,220,.75)"></div>
<div class="a" style="left:367px;top:325.00px;width:109px;height:21.00px;border:1px solid #8a78b0"></div>
<div class="a" style="left:368px;top:326.00px;width:107px;height:19.00px;border:1px solid rgba(255,235,220,.75)"></div>
<div class="a" style="left:366px;top:283.00px;width:3px;height:3px;background:#3f6fc0;box-shadow:0 0 0 .7px rgba(255,240,230,.85)"></div>
<div class="a" style="left:474px;top:283.00px;width:3px;height:3px;background:#3f6fc0;box-shadow:0 0 0 .7px rgba(255,240,230,.85)"></div>
<div class="a" style="left:366px;top:303.00px;width:3px;height:3px;background:#8a2434;box-shadow:0 0 0 .7px rgba(255,240,230,.85)"></div>
<div class="a" style="left:474px;top:303.00px;width:3px;height:3px;background:#8a2434;box-shadow:0 0 0 .7px rgba(255,240,230,.85)"></div>
<div class="a" style="left:366px;top:324.00px;width:3px;height:3px;background:#4d50a0;box-shadow:0 0 0 .7px rgba(255,240,230,.85)"></div>
<div class="a" style="left:474px;top:324.00px;width:3px;height:3px;background:#4d50a0;box-shadow:0 0 0 .7px rgba(255,240,230,.85)"></div>
<div class="a" style="left:367px;top:364px;width:108px;height:2px;background:#2f6b4a;"></div>
<div class="a" style="left:366px;top:342px;width:155px;height:29.5px;border:2px solid #cf5a5a"></div>
<div class="t" style="left:369.94px;top:348.35px;font-size:14px;height:14px;line-height:14px;color:#111;font-weight:normal;transform:scaleX(0.9468);transform-origin:0 0;">=LOGINV(<span style="color:#4472c4">D4</span>,<span style="color:#c0504d">D5</span>,<span style="color:#8064a2">D6</span>)</div>
<div class="a" style="left:495.5px;top:347.48px;width:1px;height:15px;background:#111;"></div>
<div class="a" style="left:2px;top:477px;width:718px;height:25.3px;background:#ebe8e5;"></div>
<div class="a" style="left:705.3px;top:204.5px;width:14.7px;height:274px;background:#f8f8f8;border-radius:7px 0 0 7px"></div>
<svg style="left:710px;top:208px;" width="8" height="5" viewBox="0 0 8 5"><path d="M4 0 L7.5 5 H.5 Z" fill="#666"/></svg>
<div class="a" style="left:711px;top:217.5px;width:6px;height:141px;background:#6e6e6e;border-radius:3px"></div>
<svg style="left:710px;top:469px;" width="8" height="5" viewBox="0 0 8 5"><path d="M4 5 L7.5 0 H.5 Z" fill="#666"/></svg>
<svg style="left:21px;top:486px;" width="6" height="9" viewBox="0 0 6 9"><path d="M5 .5 L1 4.5 L5 8.5" fill="none" stroke="#444" stroke-width="1.1"/></svg>
<svg style="left:48px;top:486px;" width="6" height="9" viewBox="0 0 6 9"><path d="M1 .5 L5 4.5 L1 8.5" fill="none" stroke="#444" stroke-width="1.1"/></svg>
<div class="a" style="left:71.5px;top:489px;width:2px;height:2px;border-radius:1px;background:#333"></div>
<div class="a" style="left:75px;top:489px;width:2px;height:2px;border-radius:1px;background:#333"></div>
<div class="a" style="left:78.5px;top:489px;width:2px;height:2px;border-radius:1px;background:#333"></div>
<div class="t" style="left:100.20px;top:485.50px;font-size:11px;height:11px;line-height:11px;color:#333;font-weight:normal;transform:scaleX(0.9954);transform-origin:0 0;">CRITBINOM</div>
<div class="t" style="left:181.74px;top:485.50px;font-size:11px;height:11px;line-height:11px;color:#333;font-weight:normal;transform:scaleX(1.0268);transform-origin:0 0;">Sheet17</div>
<div class="t" style="left:243.18px;top:485.50px;font-size:11px;height:11px;line-height:11px;color:#333;font-weight:normal;transform:scaleX(0.9352);transform-origin:0 0;">FDIST</div>
<div class="t" style="left:294.12px;top:485.50px;font-size:11px;height:11px;line-height:11px;color:#333;font-weight:normal;transform:scaleX(0.9963);transform-origin:0 0;">FINV</div>
<div class="a" style="left:172.3px;top:483px;width:1px;height:14.5px;background:#d6d3d0;"></div>
<div class="a" style="left:232.7px;top:483px;width:1px;height:14.5px;background:#d6d3d0;"></div>
<div class="a" style="left:283.3px;top:483px;width:1px;height:14.5px;background:#d6d3d0;"></div>
<div class="a" style="left:332.6px;top:477px;width:38.6px;height:22.5px;background:#fff;overflow:hidden"><div class="t" style="left:6.4px;top:6.5px;font-size:11.5px;line-height:11.5px;color:#222;-webkit-text-stroke:.35px #222;transform:scaleX(.97);transform-origin:0 0">LOGINV</div><div class="a" style="left:7px;top:19.2px;width:40px;height:1.6px;background:#2a7a50"></div></div>
<div class="a" style="left:379.5px;top:489px;width:2px;height:2px;border-radius:1px;background:#333"></div>
<div class="a" style="left:383px;top:489px;width:2px;height:2px;border-radius:1px;background:#333"></div>
<div class="a" style="left:386.5px;top:489px;width:2px;height:2px;border-radius:1px;background:#333"></div>
<svg style="left:405.5px;top:485.5px;" width="10" height="9" viewBox="0 0 10 9"><path d="M4.75 0 V9 M.2 4.5 H9.3" stroke="#333" stroke-width="1"/></svg>
<div class="a" style="left:436px;top:486px;width:2px;height:2px;border-radius:1px;background:#333"></div>
<div class="a" style="left:436px;top:489.5px;width:2px;height:2px;border-radius:1px;background:#333"></div>
<div class="a" style="left:436px;top:493px;width:2px;height:2px;border-radius:1px;background:#333"></div>
<div class="a" style="left:451px;top:483px;width:255px;height:14px;background:#f6f6f6;border-radius:7px"></div>
<svg style="left:454.5px;top:486.5px;" width="6" height="7" viewBox="0 0 6 7"><path d="M0 3.5 L5.5 0 V7 Z" fill="#666"/></svg>
<div class="a" style="left:464.5px;top:486.5px;width:189px;height:6.4px;background:#6e6e6e;border-radius:3.2px"></div>
<svg style="left:697px;top:486.5px;" width="6" height="7" viewBox="0 0 6 7"><path d="M5.5 3.5 L0 0 V7 Z" fill="#666"/></svg>
<div class="a" style="left:2px;top:502.3px;width:718px;height:18px;background:#f3f3f3;"></div>
<div class="t" style="left:10.63px;top:508.45px;font-size:9.5px;height:9.5px;line-height:9.5px;color:#555;font-weight:normal;transform:scaleX(0.8793);transform-origin:0 0;">Edit</div>
<svg style="left:50px;top:508px;" width="12" height="11" viewBox="0 0 12 11"><path d="M4 9.5 H.6 V.6 H11 V5" fill="none" stroke="#444" stroke-width="1.1"/><path d="M.6 2.8 H11" stroke="#444" stroke-width="1.1"/><circle cx="7.6" cy="7.4" r="3" fill="#f3f3f3" stroke="#444" stroke-width="1.1"/><circle cx="7.6" cy="7.4" r="1.2" fill="#444"/></svg>
<svg style="left:75.5px;top:506.5px;" width="12" height="13" viewBox="0 0 12 13"><circle cx="5.3" cy="2" r="1.5" fill="none" stroke="#333" stroke-width="1.1"/><path d="M.6 3.8 Q1.2 5.2 3.4 5.4 H7.2 Q9.4 5.2 10 3.8" fill="none" stroke="#333" stroke-width="1.1"/><path d="M3.6 5.4 L3 10 Q2.8 11.6 2.2 12 M7 5.4 L6.8 8" fill="none" stroke="#333" stroke-width="1.1"/><path d="M6.6 8.6 L10.6 12.4 M10.6 8.6 L6.6 12.4" stroke="#333" stroke-width="1.1"/></svg>
<div class="t" style="left:90.53px;top:508.15px;font-size:9.5px;height:9.5px;line-height:9.5px;color:#222;font-weight:bold;transform:scaleX(0.9083);transform-origin:0 0;">Accessibility: Investigate</div>
<svg style="left:479px;top:507px;" width="11" height="11" viewBox="0 0 11 11"><rect x=".5" y=".5" width="10" height="10" fill="none" stroke="#b0b0b0"/><path d="M3.8 .5 V10.5 M7.2 .5 V10.5 M.5 3.8 H10.5 M.5 7.2 H10.5" stroke="#b0b0b0"/></svg>
<svg style="left:512px;top:507px;" width="11" height="11" viewBox="0 0 11 11"><rect x=".5" y=".5" width="10" height="10" fill="none" stroke="#b0b0b0"/><rect x="2.5" y="2.5" width="6" height="6" fill="none" stroke="#b0b0b0"/><path d="M4 5 H7 M4 6.5 H7" stroke="#b0b0b0"/></svg>
<svg style="left:544.5px;top:507px;" width="12" height="11" viewBox="0 0 12 11"><path d="M.5 .5 V10.5 H11.5 V.5 M.5 6 H11.5 M4 .5 V6 M7 .5 V6" fill="none" stroke="#b0b0b0"/></svg>
<div class="a" style="left:571px;top:512px;width:6.5px;height:1px;background:#b8b8b8;"></div>
<div class="a" style="left:582.5px;top:512px;width:81px;height:1.2px;background:#8a8a8a;"></div>
<div class="a" style="left:622.5px;top:509.5px;width:1.5px;height:6px;background:#777;"></div>
<svg style="left:668.5px;top:509px;" width="7" height="7" viewBox="0 0 7 7"><path d="M3.5 0 V7 M0 3.5 H7" stroke="#b8b8b8" stroke-width="1"/></svg>
<div class="t" style="left:685.15px;top:508.00px;font-size:10px;height:10px;line-height:10px;color:#a8a8a8;font-weight:normal;transform:scaleX(0.8537);transform-origin:0 0;">100%</div>
</body></html>
